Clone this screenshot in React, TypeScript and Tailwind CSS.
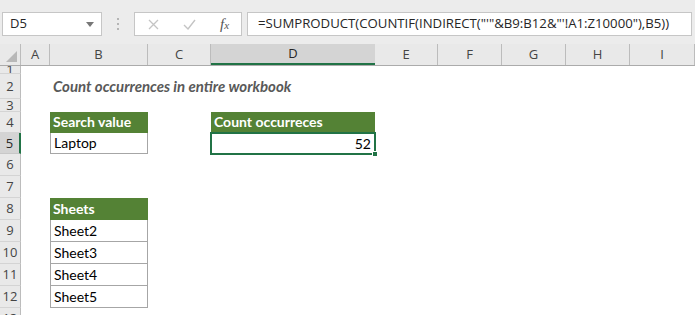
import React from 'react';

const cols = [
  { key: 'A', w: 'w-[29px]' },
  { key: 'B', w: 'w-[98px]' },
  { key: 'C', w: 'w-[63px]' },
  { key: 'D', w: 'w-[164px]' },
  { key: 'E', w: 'w-[63px]' },
  { key: 'F', w: 'w-[64px]' },
  { key: 'G', w: 'w-[64px]' },
  { key: 'H', w: 'w-[64px]' },
  { key: 'I', w: 'w-[65px]' },
];

const rows = [
  { n: 1, h: 'h-[8px]' },
  { n: 2, h: 'h-[25px]' },
  { n: 3, h: 'h-[13px]' },
  { n: 4, h: 'h-[21px]' },
  { n: 5, h: 'h-[21px]' },
  { n: 6, h: 'h-[22px]' },
  { n: 7, h: 'h-[22px]' },
  { n: 8, h: 'h-[22px]' },
  { n: 9, h: 'h-[22px]' },
  { n: 10, h: 'h-[22px]' },
  { n: 11, h: 'h-[22px]' },
  { n: 12, h: 'h-[22px]' },
  { n: 13, h: 'h-[22px]' },
];

const sheets: Record<number, string> = { 9: 'Sheet2', 10: 'Sheet3', 11: 'Sheet4', 12: 'Sheet5' };

const FormulaBar: React.FC = () => (
  <div className="h-[44px] bg-[#ececec] flex items-start pt-[12px] font-['Open_Sans',sans-serif] text-[#262626]">
    {/* Name box */}
    <div className="ml-[2px] w-[100px] h-[24px] bg-white border border-[#c6c6c6] flex items-center justify-between pl-[7px] pr-[7px] text-[13px]">
      <span>D5</span>
      <svg width="8" height="5" viewBox="0 0 8 5"><path d="M0 0 L8 0 L4 5 Z" fill="#777" /></svg>
    </div>
    <div className="w-[32px] h-[24px] flex flex-col items-center justify-center gap-[3px]">
      <div className="w-[2px] h-[2px] bg-[#b5b5b5]" />
      <div className="w-[2px] h-[2px] bg-[#b5b5b5]" />
      <div className="w-[2px] h-[2px] bg-[#b5b5b5]" />
    </div>
    {/* cancel / enter / fx */}
    <div className="w-[108px] h-[24px] bg-white border border-[#c6c6c6] flex items-center pl-[13px]">
      <svg width="11" height="11" viewBox="0 0 11 11"><path d="M1 1 L10 10 M10 1 L1 10" stroke="#c4c4c4" strokeWidth="1.3" fill="none" /></svg>
      <svg className="ml-[24px]" width="13" height="11" viewBox="0 0 13 11"><path d="M1 6 L5 10 L12 1" stroke="#c4c4c4" strokeWidth="1.4" fill="none" /></svg>
      <span className="ml-[24px] font-['Liberation_Serif',serif] italic text-[15px] text-[#555] leading-none">
        f<span className="text-[11px]">x</span>
      </span>
    </div>
    <div className="ml-[5px] w-[445px] h-[24px] bg-white border border-[#c6c6c6] flex items-center pl-[10px] text-[13.2px] whitespace-nowrap overflow-hidden">
      =SUMPRODUCT(COUNTIF(INDIRECT("'"&amp;B9:B12&amp;"'!A1:Z10000"),B5))
    </div>
  </div>
);

const HeaderRow: React.FC = () => (
  <div className="flex h-[22px] bg-[#e9e9e9] border-b border-[#ababab] font-['Open_Sans',sans-serif] text-[13px] text-[#444]">
    <div className="w-[21px] border-r border-[#bcbcbc] flex items-end justify-end pr-[3px] pb-[3px]">
      <svg width="11" height="11" viewBox="0 0 11 11"><path d="M11 0 L11 11 L0 11 Z" fill="#b8b8b8" /></svg>
    </div>
    {cols.map(c => (
      <div
        key={c.key}
        className={`${c.w} flex items-center justify-center ${c.key === 'D' ? 'bg-[#d4d4d4] border-b-2 border-[#217346] text-[#262626]' : 'border-r border-[#bcbcbc]'}`}
      >
        {c.key}
      </div>
    ))}
  </div>
);

const cellContent = (row: number, col: string) => {
  if (row === 2 && col === 'B') {
    return (
      <div className="h-full flex items-end pb-[2px] pl-[3px] whitespace-nowrap text-[15px] font-bold italic text-[#595959]">
        Count occurrences in entire workbook
      </div>
    );
  }
  if ((row === 4 && col === 'B') || (row === 8 && col === 'B') || (row === 4 && col === 'D')) {
    const label = row === 8 ? 'Sheets' : col === 'B' ? 'Search value' : 'Count occurreces';
    return (
      <div className="h-full bg-[#548235] text-white font-bold text-[14px] flex items-end pb-[1px] pl-[3px]">{label}</div>
    );
  }
  if (row === 5 && col === 'B') {
    return <div className="h-full border-x border-b border-[#a6a6a6] flex items-end pl-[3px] text-[14px]">Laptop</div>;
  }
  if (sheets[row] && col === 'B') {
    return <div className="h-full border-x border-b border-[#a6a6a6] flex items-end pl-[3px] text-[14px]">{sheets[row]}</div>;
  }
  if (row === 5 && col === 'D') {
    return (
      <div className="relative h-full flex items-end justify-end pr-[4px] text-[14px]">
        52
        <div className="absolute -top-[1px] -left-[1px] -right-[1px] -bottom-[1px] border-2 border-[#217346]" />
        <div className="absolute -right-[3px] -bottom-[3px] w-[6px] h-[6px] bg-[#217346] border border-white" />
      </div>
    );
  }
  return null;
};

export default function App() {
  return (
    <div className="w-[695px] h-[315px] bg-white overflow-hidden">
      <FormulaBar />
      <HeaderRow />
      <div className="font-['Lato',sans-serif] text-black">
        {rows.map(r => (
          <div key={r.n} className={`flex ${r.h}`}>
            <div
              className={`w-[21px] shrink-0 overflow-hidden flex items-center justify-center border-b font-['Open_Sans',sans-serif] text-[13px] leading-none ${
                r.n === 5
                  ? 'bg-[#d4d4d4] border-r-2 border-r-[#217346] border-b-[#c8c8c8] text-[#262626]'
                  : 'bg-[#e9e9e9] border-r border-r-[#bcbcbc] border-b-[#d4d4d4] text-[#444]'
              }`}
            >
              {r.n}
            </div>
            {cols.map(c => (
              <div key={c.key} className={`${c.w} shrink-0 h-full`}>
                {cellContent(r.n, c.key)}
              </div>
            ))}
          </div>
        ))}
      </div>
    </div>
  );
}
